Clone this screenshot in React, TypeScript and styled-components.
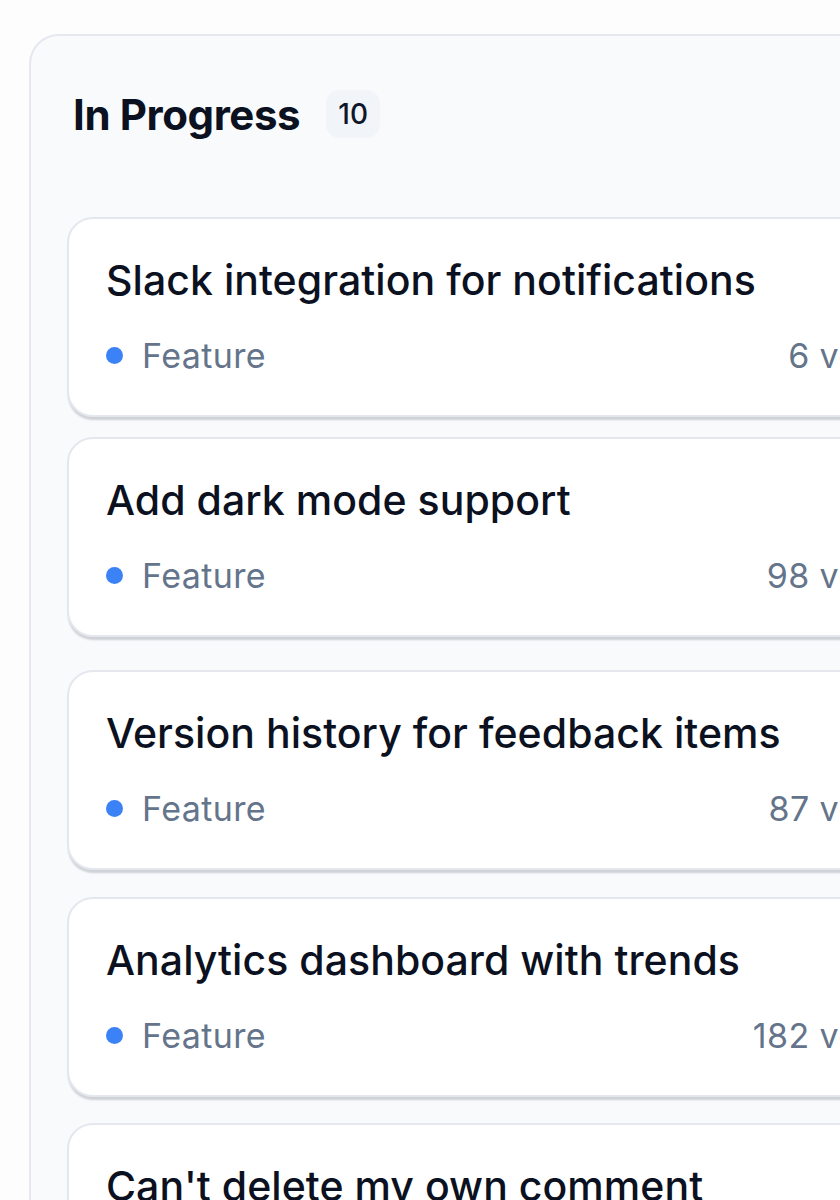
import React from 'react';
import styled, {createGlobalStyle} from 'styled-components';

interface IFeedbackItem {
    title: string;
    tag: string;
    votes: number;
    offset: number;
}

const items: IFeedbackItem[] = [
    {title: 'Slack integration for notifications', tag: 'Feature', votes: 6, offset: 0},
    {title: 'Add dark mode support', tag: 'Feature', votes: 98, offset: 20},
    {title: 'Version history for feedback items', tag: 'Feature', votes: 87, offset: 33},
    {title: 'Analytics dashboard with trends', tag: 'Feature', votes: 182, offset: 27},
    {title: "Can't delete my own comment", tag: 'Bug', votes: 14, offset: 26},
];

const GlobalStyle = createGlobalStyle`
    html, body {
        margin: 0;
        padding: 0;
        background: #fdfdfe;
        overflow: hidden;
    }
    body {
        font-family: Inter, "Noto Sans", "Liberation Sans", sans-serif;
        -webkit-font-smoothing: antialiased;
    }
`;

const App: React.FC = () => {
    return (
        <Page>
            <GlobalStyle/>
            <Column>
                <ColumnHeader>
                    <ColumnTitle>In Progress</ColumnTitle>
                    <CountBadge>10</CountBadge>
                </ColumnHeader>
                <CardList>
                    {items.map((item, idx) => (
                        <Card key={idx} $offset={item.offset}>
                            <CardTitle>{item.title}</CardTitle>
                            <CardMeta>
                                <Tag>
                                    <TagDot/>
                                    {item.tag}
                                </Tag>
                                <Votes>{item.votes} votes</Votes>
                            </CardMeta>
                        </Card>
                    ))}
                </CardList>
            </Column>
        </Page>
    );
};

export default App;

const Page = styled.div`
    width: 1040px;
    height: 1200px;
    padding: 34px 0 0 29px;
    box-sizing: border-box;
    overflow: hidden;
`;

const Column = styled.section`
    width: 957px;
    box-sizing: border-box;
    background: #f8fafc;
    border: 2px solid #e5e8ee;
    border-radius: 30px;
    padding: 52px 36px 40px;
`;

const ColumnHeader = styled.header`
    display: flex;
    align-items: center;
    gap: 26px;
    height: 52px;
    margin: 0 6px 77px;
`;

const ColumnTitle = styled.h2`
    margin: 0;
    font-size: 42px;
    font-weight: 700;
    letter-spacing: -0.4px;
    color: #0b1120;
`;

const CountBadge = styled.span`
    display: inline-flex;
    align-items: center;
    justify-content: center;
    width: 54px;
    height: 48px;
    border-radius: 14px;
    background: #f1f4f8;
    font-size: 28px;
    font-weight: 500;
    color: #0f172a;
`;

const CardList = styled.div`
    display: flex;
    flex-direction: column;
`;

const Card = styled.article<{ $offset: number }>`
    margin-top: ${p => p.$offset}px;
    background: #ffffff;
    border: 2px solid #e4e8ee;
    border-radius: 26px;
    padding: 36px 37px 38px;
    box-shadow: 0 4px 2px -1px rgba(15, 23, 42, 0.18);
`;

const CardTitle = styled.h3`
    margin: 0 0 28px;
    font-size: 41px;
    line-height: 50px;
    font-weight: 500;
    letter-spacing: 0.05px;
    color: #0b1120;
    white-space: nowrap;
`;

const CardMeta = styled.div`
    display: flex;
    align-items: center;
    justify-content: space-between;
    height: 44px;
    font-size: 34px;
    letter-spacing: 0.4px;
    color: #64748b;
`;

const Tag = styled.span`
    display: inline-flex;
    align-items: center;
    gap: 19px;
`;

const TagDot = styled.span`
    width: 17px;
    height: 17px;
    border-radius: 50%;
    background: #3b82f6;
`;

const Votes = styled.span`
    white-space: nowrap;
`;
